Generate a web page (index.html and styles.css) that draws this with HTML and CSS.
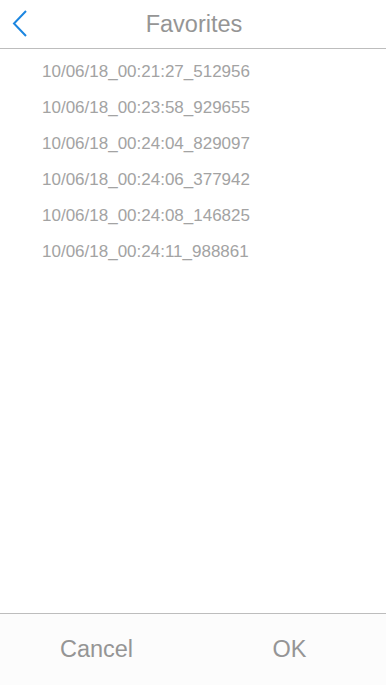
FILE: index.html
```html
<!DOCTYPE html>
<html>
<head>
	<title>Favorites</title>
	<meta charset="UTF-8">
	<link rel="stylesheet" href="styles.css">
</head>
<body>
	<div class="screen">
		<header class="topbar">
			<button type="button" class="back" aria-label="Back">
				<svg width="40" height="48" viewBox="0 0 40 48">
					<polyline points="26,11 14,23.5 26,36" fill="none" stroke="#1c86e0" stroke-width="2"/>
				</svg>
			</button>
			<h1 class="title">Favorites</h1>
		</header>

		<ul class="fav-list">
			<li class="fav-item">10/06/18_00:21:27_512956</li>
			<li class="fav-item">10/06/18_00:23:58_929655</li>
			<li class="fav-item">10/06/18_00:24:04_829097</li>
			<li class="fav-item">10/06/18_00:24:06_377942</li>
			<li class="fav-item">10/06/18_00:24:08_146825</li>
			<li class="fav-item">10/06/18_00:24:11_988861</li>
		</ul>

		<nav class="actions">
			<button type="button" class="action">Cancel</button>
			<button type="button" class="action">OK</button>
		</nav>
	</div>
</body>
</html>
```

FILE: styles.css
```css
* { box-sizing: border-box; }
html, body { margin: 0; padding: 0; }
body { font-family: "Liberation Sans", Arial, sans-serif; background: #fff; }
ul, li { margin: 0; padding: 0; list-style: none; }

.screen {
	display: flex;
	flex-direction: column;
	height: 100vh;
}

.topbar {
	position: relative;
	height: 49px;
	border-bottom: 1px solid #bdbdbd;
	display: flex;
	align-items: center;
	justify-content: center;
}

.back {
	position: absolute;
	left: 0;
	top: 0;
	padding: 0;
	border: 0;
	background: none;
	line-height: 0;
}

.title {
	margin: 0;
	padding-left: 2px;
	font-family: "Liberation Sans", Arial, sans-serif;
	font-size: 23.5px;
	font-weight: normal;
	color: #959595;
	line-height: 50px;
}

.fav-list {
	flex: 1;
	padding-top: 5px;
}

.fav-item {
	height: 36px;
	line-height: 36px;
	padding-left: 42px;
	font-size: 17px;
	color: #a3a3a3;
}

.actions {
	height: 72px;
	border-top: 1px solid #bdbdbd;
	background: #fcfcfc;
	display: flex;
}

.action {
	flex: 1;
	border: 0;
	background: none;
	font-family: "Liberation Sans", Arial, sans-serif;
	font-size: 23.5px;
	color: #959595;
	padding: 0;
}
```
